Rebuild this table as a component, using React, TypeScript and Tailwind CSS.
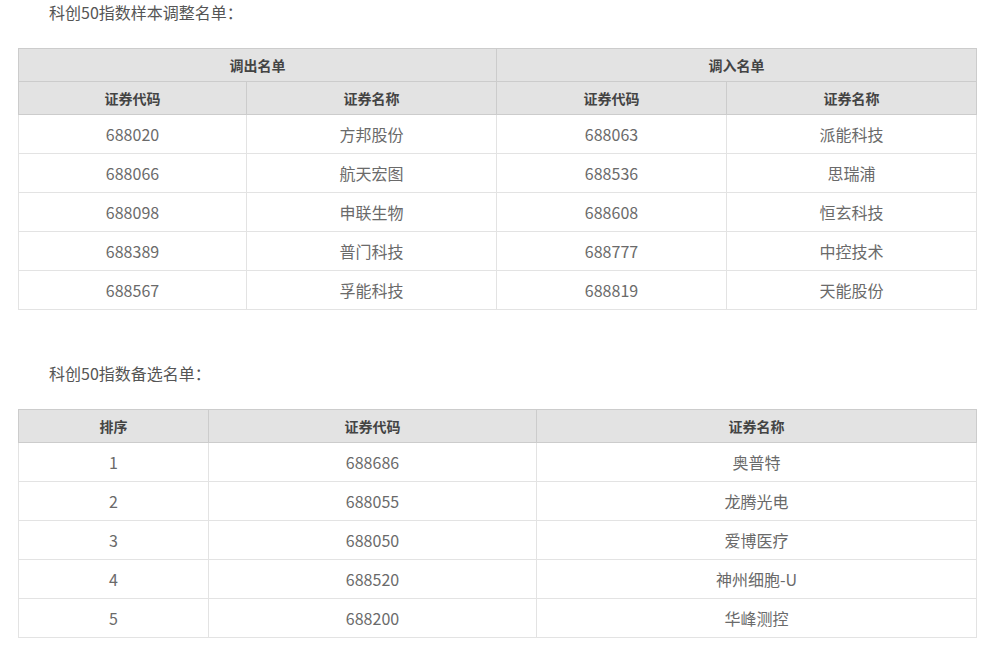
const outRows = [
  ["688020", "方邦股份", "688063", "派能科技"],
  ["688066", "航天宏图", "688536", "思瑞浦"],
  ["688098", "申联生物", "688608", "恒玄科技"],
  ["688389", "普门科技", "688777", "中控技术"],
  ["688567", "孚能科技", "688819", "天能股份"],
];

const backupRows = [
  ["1", "688686", "奥普特"],
  ["2", "688055", "龙腾光电"],
  ["3", "688050", "爱博医疗"],
  ["4", "688520", "神州细胞-U"],
  ["5", "688200", "华峰测控"],
];

const th = "border border-[#cccccc] bg-[#e3e3e3] text-[14px] font-bold text-[#444] text-center p-0";
const td = "border border-[#e3e3e3] text-[16px] text-[#6a6a6a] text-center p-0 h-[39px]";

export default function App() {
  return (
    <div
      className="bg-white min-h-[647px] w-[992px] px-[18px]"
      style={{ fontFamily: '"Noto Sans CJK SC", "Noto Sans", sans-serif' }}
    >
      <p className="text-[16px] leading-[24px] text-[#555] pl-[31px]">科创50指数样本调整名单：</p>

      <table className="mt-[24px] w-[958px] table-fixed border-collapse">
        <colgroup>
          <col className="w-[228px]" />
          <col className="w-[250px]" />
          <col className="w-[230px]" />
          <col className="w-[250px]" />
        </colgroup>
        <thead>
          <tr className="h-[33px]">
            <th colSpan={2} className={th}>调出名单</th>
            <th colSpan={2} className={th}>调入名单</th>
          </tr>
          <tr className="h-[33px]">
            <th className={th}>证券代码</th>
            <th className={th}>证券名称</th>
            <th className={th}>证券代码</th>
            <th className={th}>证券名称</th>
          </tr>
        </thead>
        <tbody>
          {outRows.map((r) => (
            <tr key={r[0]}>
              {r.map((c, i) => (
                <td key={i} className={td}>{c}</td>
              ))}
            </tr>
          ))}
        </tbody>
      </table>

      <p className="mt-[51px] text-[16px] leading-[24px] text-[#555] pl-[31px]">科创50指数备选名单：</p>

      <table className="mt-[24px] w-[958px] table-fixed border-collapse">
        <colgroup>
          <col className="w-[190px]" />
          <col className="w-[328px]" />
          <col className="w-[440px]" />
        </colgroup>
        <thead>
          <tr className="h-[33px]">
            <th className={th}>排序</th>
            <th className={th}>证券代码</th>
            <th className={th}>证券名称</th>
          </tr>
        </thead>
        <tbody>
          {backupRows.map((r) => (
            <tr key={r[0]}>
              {r.map((c, i) => (
                <td key={i} className={td}>{c}</td>
              ))}
            </tr>
          ))}
        </tbody>
      </table>
    </div>
  );
}
